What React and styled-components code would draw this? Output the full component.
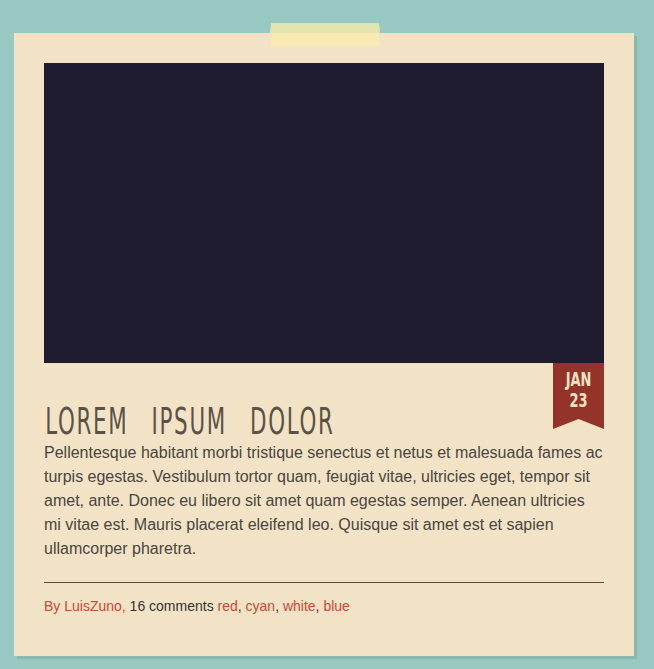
import React from 'react'
import styled, { createGlobalStyle } from 'styled-components'

const Global = createGlobalStyle`
  html, body {
    margin: 0;
    padding: 0;
    background: #97c9c2;
  }
  body {
    font-family: "Liberation Sans", Arial, sans-serif;
  }
`

const Page = styled.div`
  padding: 33px 20px 14px 14px;
  width: 620px;
`

const Card = styled.article`
  position: relative;
  width: 620px;
  box-sizing: border-box;
  padding: 30px 30px 41px;
  background: #f2e3c6;
  box-shadow: 3px 3px 0 #88b8b0;
`

const Tape = styled.div`
  position: absolute;
  top: -10px;
  left: 256px;
  width: 110px;
  height: 23px;
  background: rgba(247, 235, 172, 0.8);
  box-shadow: 0 0 2px rgba(120, 110, 80, 0.25);
  clip-path: polygon(1% 0, 99% 0, 100% 30%, 99% 55%, 100% 100%, 0 100%, 1% 70%, 0 40%);
`

const Photo = styled.div`
  height: 300px;
  background: #1f1c30;
`

const Body = styled.div`
  position: relative;
  padding-top: 38px;
`

const Ribbon = styled.div`
  position: absolute;
  top: 0;
  right: 0;
  width: 51px;
  height: 66px;
  background: #93332a;
  clip-path: polygon(0 0, 100% 0, 100% 100%, 50% 85%, 0 100%);
  color: #f2e3c6;
  font-family: "DejaVu Sans Condensed", "DejaVu Sans", sans-serif;
  font-weight: bold;
  font-size: 20px;
  line-height: 21px;
  text-align: center;
  padding-top: 6px;
  box-sizing: border-box;
`

const RibbonLine = styled.span`
  display: block;
  transform: scaleX(0.72);
`

const Title = styled.h1`
  margin: 0;
  padding-left: 2px;
  font-family: "DejaVu Sans", sans-serif;
  font-weight: normal;
  font-size: 38px;
  line-height: 40px;
  letter-spacing: 3px;
  word-spacing: 26px;
  color: #5a5246;
  white-space: nowrap;
  transform: scaleX(0.563);
  transform-origin: left center;
`

const Text = styled.p`
  margin: 0;
  font-size: 16px;
  line-height: 24px;
  color: #4a4540;
`

const Line = styled.span`
  display: block;
  white-space: nowrap;
`

const Divider = styled.hr`
  margin: 21px 0 0;
  border: 0;
  border-top: 1px solid #5a4a3a;
`

const Meta = styled.p`
  margin: 14px 0 0;
  font-size: 14px;
  line-height: 18px;
  color: #333;
`

const Red = styled.span`
  color: #c94a35;
`

const lines = [
  'Pellentesque habitant morbi tristique senectus et netus et malesuada fames ac',
  'turpis egestas. Vestibulum tortor quam, feugiat vitae, ultricies eget, tempor sit',
  'amet, ante. Donec eu libero sit amet quam egestas semper. Aenean ultricies',
  'mi vitae est. Mauris placerat eleifend leo. Quisque sit amet est et sapien',
  'ullamcorper pharetra.',
]

export default function App() {
  return (
    <>
      <Global />
      <Page>
        <Card>
          <Tape />
          <Photo />
          <Body>
            <Ribbon>
              <RibbonLine>JAN</RibbonLine>
              <RibbonLine>23</RibbonLine>
            </Ribbon>
            <Title>LOREM IPSUM DOLOR</Title>
            <Text>
              {lines.map((l) => (
                <Line key={l}>{l}</Line>
              ))}
            </Text>
            <Divider />
            <Meta>
              <Red>By LuisZuno,</Red> 16 comments <Red>red</Red>, <Red>cyan</Red>,{' '}
              <Red>white</Red>, <Red>blue</Red>
            </Meta>
          </Body>
        </Card>
      </Page>
    </>
  )
}
